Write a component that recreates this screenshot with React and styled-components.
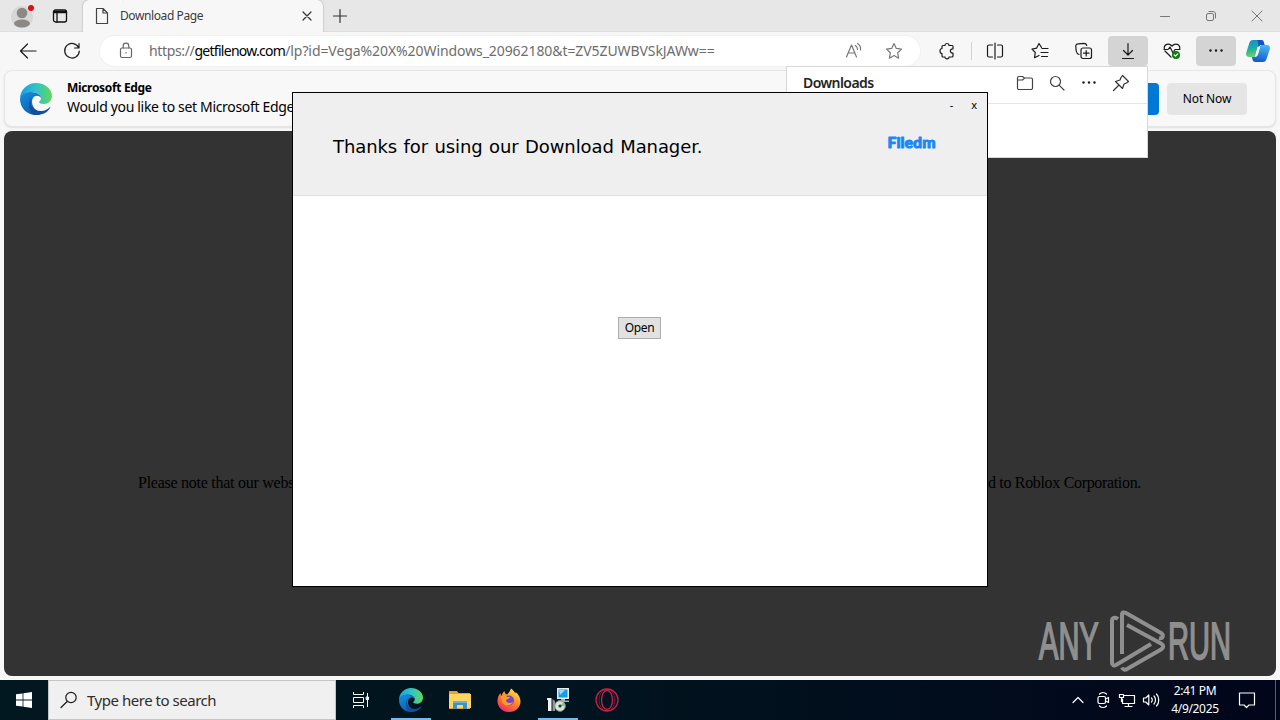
import React from "react";
import styled, { createGlobalStyle } from "styled-components";

const GlobalStyle = createGlobalStyle`
  * {
    box-sizing: border-box;
  }

  body {
    margin: 0;
    overflow: hidden;
    font-family: "Noto Sans", "Open Sans", sans-serif;
  }
`;

const Desktop = styled.div`
  position: relative;
  display: flex;
  flex-direction: column;
  width: 1280px;
  height: 720px;
  overflow: hidden;
  background: #f7f7f7;
  white-space: nowrap;
`;

const Svg = styled.svg`
  display: block;
  flex: none;
  fill: none;
  stroke: ${(p) => p.$color || "#1b1b1b"};
  stroke-width: ${(p) => p.$weight || 1.2};
  stroke-linecap: round;
  stroke-linejoin: round;
`;

const Icon = ({ w = 18, h = 18, color, weight, children }) => (
  <Svg width={w} height={h} viewBox={`0 0 ${w} ${h}`} $color={color} $weight={weight}>
    {children}
  </Svg>
);

/* ---------- tab strip ---------- */

const TabStrip = styled.div`
  display: flex;
  height: 32px;
  flex: none;
  background: #e7e7e7;
  border-bottom: 1px solid #dedede;
`;

const StripSlot = styled.div`
  display: flex;
  align-items: center;
  justify-content: center;
  width: ${(p) => p.$width}px;
  height: 32px;
`;

const Tab = styled.div`
  display: flex;
  align-items: center;
  width: 240px;
  height: 32px;
  padding: 0 9px 0 12px;
  background: #f7f7f7;
  border-radius: 6px 6px 0 0;
  box-shadow: 0 0 2px rgba(0, 0, 0, 0.35);
  clip-path: inset(0 -3px 0 -3px);
`;

const TabTitle = styled.span`
  flex: 1;
  margin-left: 11px;
  font-size: 12px;
  line-height: 16px;
  letter-spacing: -0.4px;
  color: #3b3b3b;
`;

const WindowControls = styled.div`
  display: flex;
  margin-left: auto;
`;

/* ---------- toolbar ---------- */

const Toolbar = styled.div`
  display: flex;
  align-items: center;
  flex: none;
  height: 38px;
  padding-left: 6px;
  background: #f7f7f7;
`;

const ToolButton = styled.div`
  display: flex;
  align-items: center;
  justify-content: center;
  flex: none;
  width: ${(p) => p.$width || 44}px;
  height: 30px;
  margin-left: ${(p) => p.$gap || 0}px;
  border-radius: 4px;
  background: ${(p) => (p.$active ? "#d4d4d4" : "transparent")};
`;

const AddressBar = styled.div`
  display: flex;
  align-items: center;
  flex: none;
  width: 820px;
  height: 30px;
  margin-left: 6px;
  padding: 0 17px 0 19px;
  background: #fff;
  border-radius: 15px;
  box-shadow: 0 0 1px 1px #f1f1f1;
`;

const Url = styled.div`
  flex: 1;
  margin-left: 16px;
  font-size: 14px;
  line-height: 20px;
  letter-spacing: -0.08px;
  color: #6d6d6d;

  span {
    letter-spacing: -0.35px;
  }

  b {
    font-weight: 400;
    letter-spacing: -0.72px;
    color: #000;
  }
`;

const AddressActions = styled.div`
  display: flex;
  align-items: center;
  gap: 22px;
`;

const Divider = styled.div`
  flex: none;
  width: 1px;
  height: 18px;
  margin: 0 4px 0 0;
  background: #d2d2d2;
`;

/* ---------- notification bar ---------- */

const NoticeBar = styled.div`
  display: flex;
  align-items: center;
  flex: none;
  height: 57px;
  margin: 0 4px 4px;
  padding: 0 28px 0 15px;
  border: 1px solid #e6e6e6;
  border-radius: 8px;
  background: #f8f8f8;
  box-shadow: 0 1px 2px rgba(0, 0, 0, 0.1);
`;

const NoticeText = styled.div`
  flex: 1;
  margin: -2px 0 0 15px;
  color: #000;
`;

const NoticeTitle = styled.div`
  font-size: 12px;
  font-weight: 700;
  line-height: 18px;
  letter-spacing: -0.33px;
`;

const NoticeBody = styled.div`
  font-size: 14px;
  line-height: 20px;
  letter-spacing: -0.33px;
`;

const NoticeButton = styled.div`
  display: flex;
  align-items: center;
  justify-content: center;
  width: 80px;
  height: 32px;
  margin-left: 8px;
  border-radius: 4px;
  font-size: 12px;
  letter-spacing: -0.15px;
  background: ${(p) => (p.$primary ? "#0078d4" : "#e5e5e5")};
`;

/* ---------- page ---------- */

const Page = styled.div`
  display: flex;
  justify-content: space-between;
  flex: none;
  height: 545px;
  margin: 0 4px 4px;
  padding: 343px 135px 0 134px;
  border-radius: 8px;
  background: #333;
  font-family: "Liberation Serif", serif;
  font-size: 16px;
  line-height: 18px;
  color: #000;
`;

const Disclaimer = styled.span`
  letter-spacing: ${(p) => p.$tracking}px;
`;

const Watermark = styled.div`
  position: absolute;
  left: 1030px;
  top: 600px;
`;

/* ---------- downloads flyout ---------- */

const Flyout = styled.div`
  position: absolute;
  left: 786px;
  top: 66px;
  width: 362px;
  height: 92px;
  background: #fff;
  border: 1px solid #d8d8d8;
`;

const FlyoutHeader = styled.div`
  display: flex;
  align-items: center;
  height: 37px;
  padding: 0 17px 5px 16px;
  border-bottom: 1px solid #e4e4e4;
`;

const FlyoutTitle = styled.span`
  flex: 1;
  font-size: 14px;
  font-weight: 600;
  letter-spacing: -0.55px;
  color: #242424;
`;

const FlyoutActions = styled.div`
  display: flex;
  gap: 14px;
`;

/* ---------- installer dialog ---------- */

const Dialog = styled.div`
  position: absolute;
  left: 292px;
  top: 92px;
  display: flex;
  flex-direction: column;
  width: 696px;
  height: 495px;
  border: 1px solid #000;
  background: #fff;
`;

const DialogHeader = styled.div`
  height: 103px;
  background: #efefef;
  border-bottom: 1px solid #e0e0e0;
`;

const DialogControls = styled.div`
  display: flex;
  justify-content: flex-end;
  gap: 18px;
  height: 26px;
  padding: 4px 10px 0 0;
  font-size: 11px;
  line-height: 16px;
`;

const DialogBrand = styled.div`
  display: flex;
  align-items: flex-start;
  justify-content: space-between;
  padding: 0 47px 0 40px;
`;

const DialogTitle = styled.div`
  margin-top: 16px;
  font-family: "DejaVu Sans", sans-serif;
  font-size: 18px;
  line-height: 24px;
  letter-spacing: -0.09px;
  word-spacing: 0.8px;
  color: #000;
`;

const BrandSlot = styled.div`
  margin-top: 10px;
`;

const DialogBody = styled.div`
  display: flex;
  justify-content: center;
  padding-top: 121px;
`;

const OpenButton = styled.div`
  width: 43px;
  height: 22px;
  margin-right: 1px;
  border: 1px solid #adadad;
  background: #e1e1e1;
  font-size: 12px;
  line-height: 20px;
  letter-spacing: -0.3px;
  text-align: center;
  color: #000;
`;

/* ---------- taskbar ---------- */

const Taskbar = styled.div`
  display: flex;
  flex: none;
  height: 40px;
  background: linear-gradient(90deg, #021820 0%, #01131e 50%, #010a1c 85%, #01061a 100%);
`;

const TaskSlot = styled.div`
  display: flex;
  align-items: center;
  justify-content: center;
  width: ${(p) => p.$width || 49}px;
  height: 40px;
`;

const TaskApp = styled.div`
  display: flex;
  align-items: center;
  justify-content: center;
  width: 40px;
  height: 40px;
  border-top: 2px solid transparent;
  border-bottom: 2px solid ${(p) => (p.$running ? "#76b9ed" : "transparent")};
`;

const SearchBox = styled.div`
  display: flex;
  align-items: center;
  width: 288px;
  height: 40px;
  padding-left: 11px;
  border: 1px solid #c4c4c4;
  background: #f0f0f0;
  font-size: 15px;
  letter-spacing: -0.47px;
  color: #2d2d2d;

  span {
    margin-left: 9px;
  }
`;

const Tray = styled.div`
  display: flex;
  align-items: center;
  margin-left: auto;
`;

const Clock = styled.div`
  width: 64px;
  font-size: 12px;
  line-height: 18px;
  letter-spacing: -0.35px;
  text-align: center;
  color: #fff;
`;

const ShowDesktop = styled.div`
  width: 5px;
  height: 40px;
  border-left: 1px solid #566070;
`;

/* ---------- drawings ---------- */

const EdgeLogo = ({ size, id }) => (
  <svg width={size} height={size} viewBox="0 0 32 32">
    <defs>
      <linearGradient id={`${id}-top`} x1="0" y1=".5" x2="1" y2=".5">
        <stop offset="0" stopColor="#1b9de2" />
        <stop offset=".5" stopColor="#2fc2c8" />
        <stop offset="1" stopColor="#62d957" />
      </linearGradient>
      <linearGradient id={`${id}-left`} x1="0" y1="0" x2=".6" y2="1">
        <stop offset="0" stopColor="#1590df" />
        <stop offset="1" stopColor="#0b5cae" />
      </linearGradient>
    </defs>
    <path d="M0 16C0 7 7 0 16 0s16 6 16 13c0 5-4 8-8 8-3 0-5-1-5-2s2-1 2-4c0-3-4-6-9-6C6 9 1 12 0 16z" fill={`url(#${id}-top)`} />
    <path d="M0 16c1-5 6-7 11-7 6 0 10 3 10 6-2-3-6-3-8 0-3 5 1 14 10 15-2 1-4 2-7 2C7 32 0 25 0 16z" fill={`url(#${id}-left)`} />
    <path d="M12 14c-4 7 1 14 9 14 4 0 7-2 9-4 0 0 1 0 0 1-3 5-8 7-14 7C9 32 7 19 12 14z" fill="#124f9c" />
  </svg>
);

const CopilotLogo = () => (
  <svg width="24" height="24" viewBox="0 0 24 24">
    <defs>
      <linearGradient id="cp-a" x1="0" y1="0" x2=".2" y2="1">
        <stop offset="0" stopColor="#168bd4" />
        <stop offset=".55" stopColor="#1fae9c" />
        <stop offset="1" stopColor="#6cd06b" />
      </linearGradient>
      <linearGradient id="cp-b" x1=".6" y1="0" x2=".4" y2="1">
        <stop offset="0" stopColor="#46b7ee" />
        <stop offset="1" stopColor="#1458cf" />
      </linearGradient>
    </defs>
    <path d="M7 1h8c2 0 2.500 1 3 3l.5 2h-3c-2 0-3 1-3.500 3l-2 6.500c-.5 2-1.500 2.500-3 2.500H3c-2.500 0-3.500-2-2.700-4.500l3-9.500C4 2 5 1 7 1z" fill="url(#cp-a)" />
    <path d="M17 23H9.500c-2 0-2.700-1-3.200-3L6 18h2c2 0 3-1 3.500-3l2-6.500C14 6.500 15 6 16.500 6H21c2.500 0 3.500 2 2.700 4.500l-3 9C20 22 19 23 17 23z" fill="url(#cp-b)" />
    <path d="M15 1c2 0 2.500 1 3 3l.5 2h-3c-1.500 0-2.500.5-3 2L12 4c0-2-.5-3-1.500-3z" fill="#1552c5" />
    <path d="M11.500 8h2.700l-2 7c-.4 1.200-.9 2-1.700 2.500H9z" fill="#f7f7f7" />
  </svg>
);

const STAR = "M9 1.500l2.300 4.900 5.200.7-3.800 3.700.9 5.400L9 13.600l-4.600 2.600.9-5.400L1.500 7.100l5.200-.7z";

const Dots = () => (
  <Icon w={18} h={18} color="none">
    <g fill="#1b1b1b">
      <circle cx="3.500" cy="8.500" r="1.200" />
      <circle cx="9" cy="8.500" r="1.200" />
      <circle cx="14.500" cy="8.500" r="1.200" />
    </g>
  </Icon>
);

const FiledmLogo = () => (
  <svg width="56" height="28" viewBox="0 0 56 28">
    <text
      x="3.500"
      y="18.500"
      textLength="48"
      lengthAdjust="spacingAndGlyphs"
      fontFamily="Lato, sans-serif"
      fontWeight="900"
      fontSize="15.500"
      fill="#1787fb"
      stroke="#1787fb"
      strokeWidth=".9"
      strokeLinejoin="round"
    >
      Filedm
    </text>
  </svg>
);

const AnyRunLogo = () => (
  <svg width="216" height="84" viewBox="-6 -6 216 84">
    <g fill="#8f8f8f" stroke="#8f8f8f" strokeWidth="1.800" fontFamily="Liberation Sans, sans-serif" fontSize="51">
      <text transform="translate(3 53) scale(.57 1)">ANY</text>
      <text transform="translate(132 53) scale(.57 1)">RUN</text>
    </g>
    <g fill="none" stroke="#8f8f8f" strokeWidth="4" strokeLinejoin="round">
      <path d="M82 13c-3-2.500-6-1-6 2v42c0 2 2 3 4 2l35-21" />
      <path d="M86 48V9c0-3 2-3 4-2l35 20c3.500 2.500 1.500 6-2 5" />
      <path d="M91 19l34 18.500c3 2 3 4 0 6L91 63c-2 1.200-4 .8-5-1.500" />
    </g>
  </svg>
);

const Firefox = () => (
  <svg width="24" height="24" viewBox="0 0 24 24">
    <defs>
      <linearGradient id="ff" x1=".8" y1="0" x2=".2" y2="1">
        <stop offset="0" stopColor="#fff04a" />
        <stop offset=".45" stopColor="#ff8a26" />
        <stop offset="1" stopColor="#f1226c" />
      </linearGradient>
    </defs>
    <path d="M12 24C5 24 .5 19 .5 13c0-4 1.500-6 3-8 0 1 .2 2 1 3 .5-2 1.500-4 3-5 0 2 1 3 2.500 3.500C12 5 13 3 14 .5c2 1 3 3 4.500 5V4c3 2 5 6 5 9.500C23.500 19 19 24 12 24z" fill="url(#ff)" />
    <circle cx="12" cy="12.500" r="5" fill="#7544c8" />
    <path d="M4 8c3-2 5-1 6 1h3c-1 2-3 2-4 3 0 3 4 4 7 2-1 4-9 5-11 0z" fill="#ff9b21" />
  </svg>
);

const Explorer = () => (
  <svg width="22" height="20" viewBox="0 0 22 20">
    <path d="M0 1h8l1.500 2H21v16H0z" fill="#e9a32d" />
    <path d="M0 4h22v14H0z" fill="#ffd562" />
    <path d="M4 19v-8h14v8h-4v-4H8v4z" fill="#3a92cf" />
    <path d="M4 11h14v2H4z" fill="#63b4e5" />
  </svg>
);

const Installer = () => (
  <svg width="24" height="24" viewBox="0 0 24 24">
    <path d="M11 0h12v11H11z" fill="#e8eef5" />
    <path d="M12.500 1.500h9v8h-9z" fill="#169be8" />
    <path d="M13 2h6l-5 5z" fill="#95dcff" />
    <path d="M15 11h4v1.500h4V14H12v-1.500h3z" fill="#aab3bd" />
    <path d="M1 10h4.500v13H2V12H1z" fill="#f4f4f4" />
    <path d="M6.500 11l2.500 2v10H6.500z" fill="#8f979d" />
    <circle cx="14" cy="18" r="5.300" fill="#d7e5d8" stroke="#7e9382" />
    <path d="M14 18l4-4 1 4z" fill="#78c989" />
    <circle cx="14" cy="18" r="1.600" fill="#24363b" />
  </svg>
);

const leftTools = [
  {
    key: "back",
    icon: <Icon><path d="M17 9H1.500M8.500 2L1.500 9l7 7" /></Icon>,
  },
  {
    key: "reload",
    icon: <Icon><path d="M15.800 6A7.300 7.300 0 1 0 16.300 9M16 1.500V6h-4.500" /></Icon>,
  },
];

const App = () => (
  <>
    <GlobalStyle />
    <Desktop>
      <TabStrip>
        <StripSlot $width={44}>
          <svg width="24" height="26" viewBox="0 0 24 26">
            <circle cx="12" cy="14" r="11" fill="#d9d7d5" />
            <circle cx="12" cy="10" r="5.300" fill="#8b8886" />
            <ellipse cx="12" cy="20.500" rx="8" ry="4" fill="#8b8886" />
            <circle cx="21" cy="5" r="3" fill="#e00b1c" />
          </svg>
        </StripSlot>
        <StripSlot $width={32}>
          <Icon w={16} h={16} color="#111" weight={1.3}>
            <rect x="1.500" y="2" width="13" height="12" rx="2" />
            <path d="M2 4h12" strokeWidth="2.400" />
            <path d="M5 4v10" />
          </Icon>
        </StripSlot>
        <StripSlot $width={7} />
        <Tab>
          <Icon w={14} h={18} color="#444">
            <path d="M1.500 1.500h6.500l4.500 4.500v10.500h-11zM8 1.500V6h4.500" />
          </Icon>
          <TabTitle>Download Page</TabTitle>
          <Icon w={14} h={14} color="#333"><path d="M3 3l8 8M11 3l-8 8" /></Icon>
        </Tab>
        <StripSlot $width={34}>
          <Icon w={16} h={16} color="#333"><path d="M8 1.500v13M1.500 8h13" /></Icon>
        </StripSlot>
        <WindowControls>
          <StripSlot $width={46}>
            <Icon w={12} h={12} color="#777" weight={1}><path d="M1.500 6.500h9" /></Icon>
          </StripSlot>
          <StripSlot $width={46}>
            <Icon w={12} h={12} color="#777" weight={1}>
              <rect x="1.500" y="3.500" width="7" height="7" rx="1.500" />
              <path d="M4 1.500h4c1.500 0 2.500 1 2.500 2.500v4" />
            </Icon>
          </StripSlot>
          <StripSlot $width={46}>
            <Icon w={12} h={12} color="#777" weight={1}><path d="M1 1l10 10M11 1L1 11" /></Icon>
          </StripSlot>
        </WindowControls>
      </TabStrip>

      <Toolbar>
        {leftTools.map((tool) => (
          <ToolButton key={tool.key}>{tool.icon}</ToolButton>
        ))}
        <AddressBar>
          <Icon w={14} h={18} color="#666">
            <rect x="1.500" y="6" width="11" height="9.500" rx="1.500" />
            <path d="M4.200 6V4a2.800 2.800 0 0 1 5.600 0v2M7 10.500v.5" />
          </Icon>
          <Url>
            <span>https://</span>
            <b>getfilenow.com</b>/lp?id=Vega%20X%20Windows_20962180&amp;t=ZV5ZUWBVSkJAWw==
          </Url>
          <AddressActions>
            <Icon color="#777">
              <path d="M1.500 15L6.500 3l5 12M3 11h7M10.500 3.500c1.500 1 2 2.500 2 4M12.500 1.500c2.500 1.500 3.300 4 3 6.500" />
            </Icon>
            <Icon color="#777"><path d={STAR} /></Icon>
          </AddressActions>
        </AddressBar>
        <ToolButton $width={51}>
          <Icon>
            <path
              transform="translate(2 0)"
              d="M6 3.500a2 2 0 0 1 4 0h3a1 1 0 0 1 1 1V7c-3.500-.5-3.500 4.500 0 4v3a1 1 0 0 1-1 1h-3c0 2.500-4 2.500-4 0H4a1 1 0 0 1-1-1v-2.500c-2.700 0-2.700-5 0-5V4.500a1 1 0 0 1 1-1z"
            />
          </Icon>
        </ToolButton>
        <Divider />
        <ToolButton $width={38}>
          <Icon>
            <path d="M6.500 3H3a1.500 1.500 0 0 0-1.500 1.500v9A1.500 1.500 0 0 0 3 15h3.500M11.500 3H15a1.500 1.500 0 0 1 1.500 1.500v9A1.500 1.500 0 0 1 15 15h-3.500M9 1v16" />
          </Icon>
        </ToolButton>
        <ToolButton $width={52}>
          <Icon>
            <path d="M10.500 5.500L8 1.500 5.500 6.200l-4.500.9 3.300 3.400-.8 5.200L8 13.500M11 6.500h6M10 10.500h7M10.500 14.500h6" />
          </Icon>
        </ToolButton>
        <ToolButton $width={36}>
          <Icon>
            <rect x="6" y="6" width="10.500" height="10.500" rx="2" />
            <path d="M11.200 8.500v5.500M8.500 11.200h5.500M4 12.500C2 12 1.500 10.500 1.200 9L.8 4.500C.7 3 1.500 2 3 1.900l6-.6c1.500 0 2.500.7 2.700 2.200" />
          </Icon>
        </ToolButton>
        <ToolButton $width={40} $gap={6} $active>
          <Icon><path d="M9 1.500v11M4.500 8.500L9 13l4.500-4.500M3.500 16.500h11" /></Icon>
        </ToolButton>
        <ToolButton $width={48}>
          <Icon>
            <path d="M8 15L2 9M1.300 7.500C.5 2 6 .5 9 4c3-3.500 8.500-2 7.700 3M1 7.500h4L7 5l3 6 2-3.500h5" />
            <circle cx="13" cy="13" r="4" fill="#107c10" stroke="none" />
            <path d="M11.300 13l1.200 1.200 2.200-2.400" stroke="#fff" />
          </Icon>
        </ToolButton>
        <ToolButton $width={40} $active>
          <Dots />
        </ToolButton>
        <ToolButton>
          <CopilotLogo />
        </ToolButton>
      </Toolbar>

      <NoticeBar>
        <EdgeLogo size={32} id="notice" />
        <NoticeText>
          <NoticeTitle>Microsoft Edge</NoticeTitle>
          <NoticeBody>Would you like to set Microsoft Edge</NoticeBody>
        </NoticeText>
        <NoticeButton $primary />
        <NoticeButton>Not Now</NoticeButton>
      </NoticeBar>

      <Page>
        <Disclaimer $tracking={-0.26}>Please note that our webs</Disclaimer>
        <Disclaimer $tracking={-0.33}>d to Roblox Corporation.</Disclaimer>
      </Page>

      <Taskbar>
        <TaskSlot $width={48}>
          <svg width="16" height="16" viewBox="0 0 16 16" fill="#fff">
            <path d="M0 2.300L6.600 1.400v6.200H0zM7.400 1.300L16 0v7.600H7.400zM0 8.400h6.600v6.200L0 13.700zM7.400 8.400H16V16l-8.600-1.200z" />
          </svg>
        </TaskSlot>
        <SearchBox>
          <Icon>
            <circle cx="11" cy="6.500" r="5.200" />
            <path d="M7.200 10.500L1 16.500" />
          </Icon>
          <span>Type here to search</span>
        </SearchBox>
        <TaskSlot>
          <Icon w={18} h={18} color="#fff" weight={1}>
            <path d="M1.500 1v2.500h10V1M1.500 17v-2.500h10V17M1.500 6.500h10v5h-10zM15.500 2v14" strokeLinecap="butt" strokeLinejoin="miter" />
            <path d="M14.500 6h2v2.500h-2z" fill="#fff" />
          </Icon>
        </TaskSlot>
        <TaskSlot $width={52}>
          <TaskApp $running><EdgeLogo size={24} id="task" /></TaskApp>
        </TaskSlot>
        <TaskSlot $width={46}>
          <TaskApp><Explorer /></TaskApp>
        </TaskSlot>
        <TaskSlot $width={52}>
          <TaskApp><Firefox /></TaskApp>
        </TaskSlot>
        <TaskSlot $width={46}>
          <TaskApp $running><Installer /></TaskApp>
        </TaskSlot>
        <TaskSlot $width={52}>
          <TaskApp>
            <Icon w={24} h={24} color="#c92048" weight={1.3}>
              <circle cx="12" cy="12" r="11" />
              <ellipse cx="12" cy="12" rx="5.500" ry="9.500" />
              <ellipse cx="12" cy="12" rx="8" ry="10.800" strokeWidth=".5" />
            </Icon>
          </TaskApp>
        </TaskSlot>
        <Tray>
          <TaskSlot $width={26}>
            <Icon w={12} h={12} color="#fff"><path d="M1 8.500l5-5 5 5" /></Icon>
          </TaskSlot>
          <TaskSlot $width={24}>
            <Icon w={14} h={18} color="#fff">
              <rect x="2" y="5.500" width="7.500" height="7" rx="1.500" />
              <path d="M9.500 8l3-1.500v5l-3-1.500M3.500 3c2-2 5-2 7 0M3.500 15c2 2 5 2 7 0" />
            </Icon>
          </TaskSlot>
          <TaskSlot $width={24}>
            <Icon w={18} h={16} color="#fff">
              <path d="M6 3.500h10.500v8H4.500V7M10.500 11.500v3M7 14.500h7" />
              <path d="M1.500 2.500h4v3h-4zM3.500 5.500v4" />
            </Icon>
          </TaskSlot>
          <TaskSlot $width={24}>
            <Icon w={18} h={16} color="#fff">
              <path d="M1.500 6h2.300l3-3v10l-3-3H1.500zM9.500 6c1 1 1 3 0 4M12 4c2 2 2 6 0 8M14.500 2c3 3 3 9 0 12" />
            </Icon>
          </TaskSlot>
          <Clock>
            2:41 PM
            <br />
            4/9/2025
          </Clock>
          <TaskSlot $width={40}>
            <Icon w={18} h={18} color="#fff">
              <path d="M1.500 2h15v12H11l-2.500 2.500L6 14H1.500z" />
            </Icon>
          </TaskSlot>
          <TaskSlot $width={8} />
          <ShowDesktop />
        </Tray>
      </Taskbar>

      <Watermark>
        <AnyRunLogo />
      </Watermark>

      <Flyout>
        <FlyoutHeader>
          <FlyoutTitle>Downloads</FlyoutTitle>
          <FlyoutActions>
            <Icon color="#444">
              <path d="M1.500 6V4A1.500 1.500 0 0 1 3 2.500h3.500L8.500 4H15a1.500 1.500 0 0 1 1.500 1.500V14a1.500 1.500 0 0 1-1.500 1.500H3A1.500 1.500 0 0 1 1.500 14zM1.500 6h5l2-2" />
            </Icon>
            <Icon color="#444">
              <circle cx="7.500" cy="7.500" r="5" />
              <path d="M11.300 11.300L16 16" />
            </Icon>
            <Dots />
            <Icon color="#333">
              <path d="M10.500 1.500l6 6-2 1.500-2.500 1-1.500 4.500-7-7L8 6l1-2.500zM6.500 11.500L1.500 16.500" />
            </Icon>
          </FlyoutActions>
        </FlyoutHeader>
      </Flyout>

      <Dialog>
        <DialogHeader>
          <DialogControls>
            <span>-</span>
            <span>x</span>
          </DialogControls>
          <DialogBrand>
            <DialogTitle>Thanks for using our Download Manager.</DialogTitle>
            <BrandSlot>
              <FiledmLogo />
            </BrandSlot>
          </DialogBrand>
        </DialogHeader>
        <DialogBody>
          <OpenButton>Open</OpenButton>
        </DialogBody>
      </Dialog>
    </Desktop>
  </>
);

export default App;
